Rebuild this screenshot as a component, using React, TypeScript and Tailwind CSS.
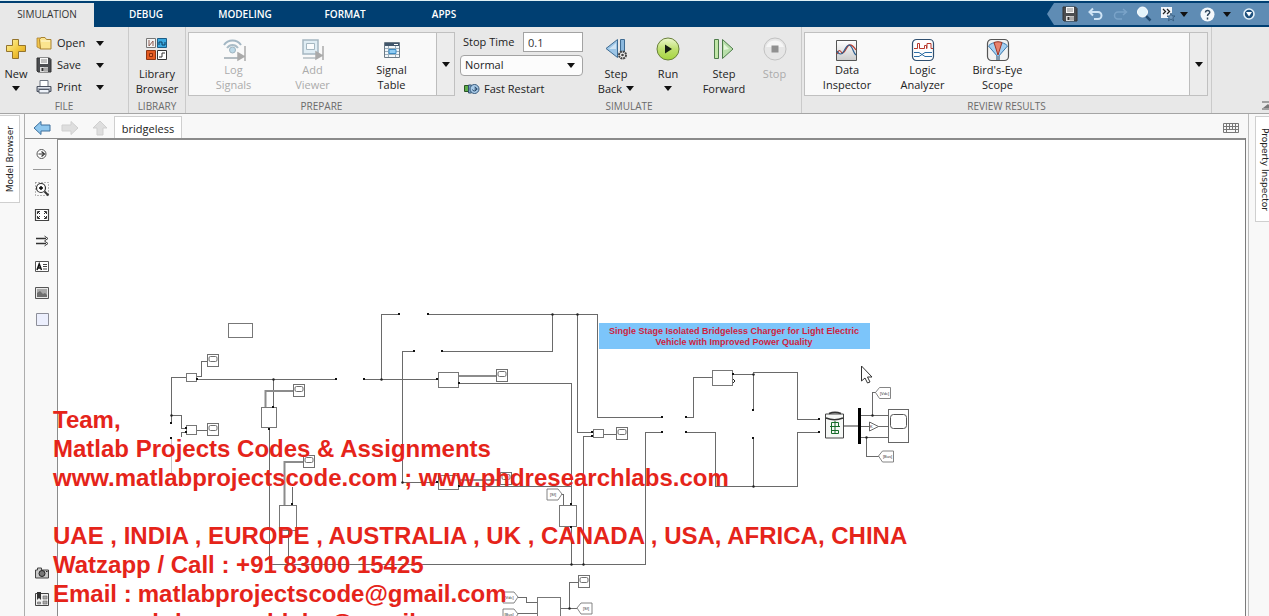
import React from "react";

function Caret({ className = "" }: { className?: string }) {
  return (
    <svg className={`shrink-0 ${className}`} width="8" height="5" viewBox="0 0 8 5" aria-hidden="true">
      <path d="M0 0h8L4 5z" fill="#111" />
    </svg>
  );
}

function NewIcon() {
  return (
    <svg width="22" height="24" viewBox="0 0 22 24" aria-hidden="true">
      <defs>
        <linearGradient id="gold" x1="0" y1="0" x2="1" y2="1">
          <stop offset="0" stopColor="#fff6a8" />
          <stop offset="0.55" stopColor="#f3c93c" />
          <stop offset="1" stopColor="#d79a1c" />
        </linearGradient>
      </defs>
      <path d="M7.500 2.500h6v6h7v6h-7v7h-6v-7h-6v-6h6z" fill="url(#gold)" stroke="#94742c" />
    </svg>
  );
}

function OpenIcon() {
  return (
    <svg width="16" height="16" viewBox="0 0 16 16" aria-hidden="true">
      <path d="M1 3h4v11L1 12z" fill="#f2c54c" stroke="#a98231" strokeWidth="0.800" />
      <path d="M3.500 4.500l1.500-2h4l1.500 2H15V14H4.500z" fill="#fbe48f" stroke="#a98231" />
      <path d="M5 6h9" stroke="#fff8d4" />
    </svg>
  );
}

function SaveIcon({ size = 16 }: { size?: number }) {
  return (
    <svg width={size} height={size} viewBox="0 0 16 16" aria-hidden="true">
      <path d="M1 1h12.500l1.500 1.500V15H2l-1-1z" fill="#4b4d50" stroke="#333" />
      <path d="M4 1h8v6H4z" fill="#f7f7f7" />
      <path d="M5 3h6M5 5h6" stroke="#888" />
      <path d="M4 10h8v5H4z" fill="#dcdcdc" />
      <path d="M5.500 11h2v3h-2z" fill="#333" />
      <path d="M9 10.500v4M11 10.500v4" stroke="#777" />
    </svg>
  );
}

function PrintIcon() {
  return (
    <svg width="16" height="16" viewBox="0 0 16 16" aria-hidden="true">
      <path d="M4 7V1.500h8V7" fill="#fff" stroke="#6d7580" />
      <path d="M1 7.500h14v5H1z" fill="#a9afbb" stroke="#4b5260" />
      <path d="M3 10.500h10V14H3z" fill="#eef3fa" stroke="#555c68" />
      <path d="M2 8.500h12" stroke="#dfe3ea" />
    </svg>
  );
}

function LibraryIcon() {
  return (
    <svg width="24" height="24" viewBox="0 0 24 24" aria-hidden="true">
      <path d="M1.500 1.500h9v9h-9z" fill="#f4f4f4" stroke="#777" />
      <path d="M4 3v6M4 9l4-5M8 4v5" stroke="#8d5d52" fill="none" />
      <path d="M12.500 1.500h9v9h-9z" fill="#3ba9e0" stroke="#1c5d86" />
      <path d="M14 8V5h3v3h3V5" stroke="#0f4063" fill="none" />
      <path d="M1.500 13.500h9v9h-9z" fill="#e45a20" stroke="#8f3512" />
      <path d="M4.500 16.500h3v3h-3z" stroke="#8b2a0a" fill="#f07a3f" />
      <path d="M12.500 13.500h9v9h-9z" fill="#fff" stroke="#333" />
      <path d="M14 20h3v-4h3" stroke="#333" fill="none" />
    </svg>
  );
}

function LogSignalsIcon() {
  return (
    <svg width="26" height="26" viewBox="0 0 26 26" fill="none" aria-hidden="true">
      <path d="M3 8c4-6 13-6 17 0" stroke="#a3b7c4" strokeWidth="2" />
      <path d="M6 11c3-4 8-4 11 0" stroke="#a9bcc7" strokeWidth="2" />
      <circle cx="11.500" cy="13" r="3" fill="#bcd9e8" stroke="#9db3bf" />
      <path d="M3 21h14" stroke="#b3bcc2" strokeWidth="2" />
      <path d="M17 16l6 3.500-6 3.500zM24 9v15" fill="#aaa" stroke="#aaa" strokeWidth="1.500" />
    </svg>
  );
}

function AddViewerIcon() {
  return (
    <svg width="26" height="26" viewBox="0 0 26 26" fill="none" aria-hidden="true">
      <path d="M3 3h15v14H3z" fill="#e0edf4" stroke="#a5b7c1" strokeWidth="1.500" />
      <path d="M6.500 6.500h8v6h-8z" fill="#fafcfd" stroke="#a5b7c1" />
      <path d="M3 21h14" stroke="#b3bcc2" strokeWidth="1.500" />
      <path d="M16 15l6 3.500-6 3.500zM23 9v14" fill="#aaa" stroke="#aaa" strokeWidth="1.500" />
    </svg>
  );
}

function SignalTableIcon() {
  return (
    <svg width="20" height="20" viewBox="0 0 20 20" aria-hidden="true">
      <path d="M2.500 2.500h15v15h-15z" fill="#f3f7fa" stroke="#6c7a86" />
      <path d="M3 3h14v3H3z" fill="#41566b" />
      <path d="M12 4.500h4" stroke="#fff" />
      <path d="M3 8.500h14M3 11.500h14M3 14.500h14M6.500 6v11M13.500 6v11" stroke="#9badba" fill="none" />
      <path d="M7 9.500h7v4H7z" fill="#8fccf4" stroke="#3c8cc5" />
    </svg>
  );
}

function StepBackIcon() {
  return (
    <svg width="24" height="24" viewBox="0 0 24 24" aria-hidden="true">
      <path d="M13.500 2.500v18L2 11.500z" fill="#9cc5e6" stroke="#3e6b92" />
      <path d="M16.500 2.500h4v14h-4z" fill="#8bb8dd" stroke="#3e6b92" />
      <path d="M12 6v6H5z" fill="#cfe4f5" />
      <circle cx="18.500" cy="18" r="3.500" fill="#eee" stroke="#444" strokeWidth="2" strokeDasharray="2 0.700" />
      <circle cx="18.500" cy="18" r="1.300" fill="#444" />
    </svg>
  );
}

function RunIcon() {
  return (
    <svg width="24" height="24" viewBox="0 0 24 24" aria-hidden="true">
      <defs>
        <linearGradient id="run" x1="0" y1="0" x2="0" y2="1">
          <stop offset="0" stopColor="#eef8d0" />
          <stop offset="0.500" stopColor="#bfe070" />
          <stop offset="1" stopColor="#a5d53d" />
        </linearGradient>
      </defs>
      <circle cx="12" cy="12" r="11" fill="url(#run)" stroke="#69803a" />
      <path d="M9 7.500l7 4.500-7 4.500z" fill="#141c12" />
    </svg>
  );
}

function StepForwardIcon() {
  return (
    <svg width="24" height="24" viewBox="0 0 24 24" aria-hidden="true">
      <path d="M2.500 2.500h4v19h-4z" fill="#c2e6a8" stroke="#4e7d4a" />
      <path d="M10.500 2.500v19L21 12z" fill="#b9dfaa" stroke="#4e7d4a" />
      <path d="M12 7v6l5-1z" fill="#e6f6dc" />
    </svg>
  );
}

function StopIcon() {
  return (
    <svg width="24" height="24" viewBox="0 0 24 24" aria-hidden="true">
      <circle cx="12" cy="12" r="11" fill="#e6e6e6" stroke="#c2c2c2" />
      <path d="M3 10a9.500 9.500 0 0 1 18 0z" fill="#f5f5f5" />
      <path d="M8.500 8.500h7v7h-7z" fill="#909090" />
    </svg>
  );
}

function FastRestartIcon() {
  return (
    <svg width="17" height="12" viewBox="0 0 17 12" aria-hidden="true">
      <path d="M1.500 2.500h4v6h-4z" fill="#5fae4a" stroke="#2c5425" />
      <path d="M5.500 2h3v8h-3z" fill="#7ba6ca" stroke="#31506d" />
      <circle cx="11.500" cy="6" r="4.500" fill="#a9cbe8" stroke="#35587a" />
      <path d="M9.500 6.500a2 2 0 1 0 2-2.500M11.500 6h3" stroke="#1f3f60" fill="none" />
    </svg>
  );
}

function DataInspectorIcon() {
  return (
    <svg width="24" height="24" viewBox="0 0 24 24" fill="none" aria-hidden="true">
      <defs>
        <linearGradient id="panel" x1="0" y1="0" x2="0" y2="1">
          <stop offset="0" stopColor="#fff" />
          <stop offset="1" stopColor="#ccc" />
        </linearGradient>
      </defs>
      <path d="M1.500 2.500h20v20h-20z" fill="url(#panel)" stroke="#555" />
      <path d="M2 16c2-5 3-4 5-1 3 1 4-6 7-8 3-1 5 2 7 5" stroke="#b8392c" strokeWidth="1.200" />
      <path d="M2 13c2 4 5 4 7 0s3-6 5-6c4 1 4 8 7 10" stroke="#2d5f8f" strokeWidth="1.200" />
    </svg>
  );
}

function LogicAnalyzerIcon() {
  return (
    <svg width="24" height="24" viewBox="0 0 24 24" fill="none" aria-hidden="true">
      <rect x="1.500" y="1.500" width="21" height="21" rx="4" fill="#fdfdfd" stroke="#2f4f6f" strokeWidth="1.200" />
      <path d="M3 10.500h3.500v-5h2v5h5v-3h2v3h.5v-5h4v5h2" stroke="#b8392c" />
      <path d="M3 14.500h5l6 4h7M3 18.500h5l6-4h7" stroke="#2d6ea5" />
    </svg>
  );
}

function BirdsEyeIcon() {
  return (
    <svg width="24" height="24" viewBox="0 0 24 24" aria-hidden="true">
      <rect x="1.500" y="1.500" width="21" height="21" rx="4" fill="#f2f2f2" stroke="#555" strokeWidth="1.200" />
      <path d="M12 19L2.500 8C6 3 18 3 21.500 8z" fill="#a5d0f2" stroke="#3a78ac" />
      <path d="M12 17L8 4.500c3-1 5-1 8 0z" fill="#e8826d" stroke="#9d3627" />
      <path d="M10 18h4v4h-4z" fill="#7f99ae" />
    </svg>
  );
}

function UndoIcon({ faded = false }: { faded?: boolean }) {
  return (
    <svg width="16" height="16" viewBox="0 0 16 16" fill="none" aria-hidden="true">
      <path
        d={faded ? "M14 6H6a3.500 3.500 0 0 0 0 7h4M11 3l3.500 3L11 9" : "M2 6h8a3.500 3.500 0 0 1 0 7H6M5 2.500L1.500 6 5 9.500"}
        stroke={faded ? "#7aa3c8" : "#cfe4f5"}
        strokeWidth={faded ? "1.500" : "2"}
      />
    </svg>
  );
}

function QuickBar() {
  return (
    <div className="mb-[2px] flex h-[22px] items-center">
      <svg width="7" height="22" viewBox="0 0 7 22" className="shrink-0" aria-hidden="true">
        <path d="M7 0v22L0 11z" fill="#5f8cb4" />
      </svg>
      <div className="flex h-[22px] items-center bg-[#5f8cb4] pl-2 pr-[14px]">
        <button aria-label="Save" className="mr-[10px]"><SaveIcon /></button>
        <button aria-label="Undo" className="mr-2"><UndoIcon /></button>
        <button aria-label="Redo" className="mr-2"><UndoIcon faded /></button>
        <button aria-label="Find" className="mr-2">
          <svg width="16" height="16" viewBox="0 0 16 16" aria-hidden="true">
            <path d="M10 10l4.500 4.500" stroke="#234c72" strokeWidth="2.500" />
            <circle cx="6.500" cy="6" r="5" fill="#e4f4fb" stroke="#fff" />
          </svg>
        </button>
        <button aria-label="Favorite commands" className="flex items-center gap-1">
          <svg width="16" height="16" viewBox="0 0 16 16" fill="none" aria-hidden="true">
            <path d="M1 1h11v11H1z" fill="#f2f6fa" />
            <path d="M3 3l2.500 2.500L3 8M7 3l2.500 2.500L7 8" stroke="#222" strokeWidth="1.300" />
            <path d="M11 7l1.200 3H15l-2.200 1.800.8 3L11 13l-2.600 1.800.8-3L7 10h2.800z" fill="#6f97bb" stroke="#2e5579" strokeWidth="0.800" />
          </svg>
          <Caret />
        </button>
        <button aria-label="Help" className="ml-3 flex items-center gap-2">
          <svg width="15" height="15" viewBox="0 0 15 15" fill="none" aria-hidden="true">
            <circle cx="7.500" cy="7.500" r="7" fill="#f4f8fb" />
            <path d="M5.500 5.500c0-3 4.500-2.500 4.200 0-.2 1.500-2.200 1.500-2.200 3.500M7.500 10.500v2" stroke="#30475d" strokeWidth="1.500" />
          </svg>
          <Caret />
        </button>
        <button aria-label="Minimize toolstrip" className="ml-3">
          <svg width="12" height="12" viewBox="0 0 12 12" aria-hidden="true">
            <circle cx="6" cy="6" r="5" fill="#1c4f7c" stroke="#e6f2fa" strokeWidth="1.600" />
            <path d="M3 4h6L6 8.500z" fill="#fff" />
          </svg>
        </button>
      </div>
    </div>
  );
}

function Section({ label, className, children }: { label: string; className: string; children: React.ReactNode }) {
  return (
    <section aria-label={label} className={`flex shrink-0 flex-col ${className}`}>
      <div className="flex h-[68px] shrink-0 items-start pt-[5px]">{children}</div>
      <div className="pt-1 text-center text-[10px] leading-[14px] text-[#6b6b6b]">{label}</div>
    </section>
  );
}

function FileRow({ icon, label }: { icon: React.ReactNode; label: string }) {
  return (
    <button className="flex h-[22px] w-[68px] shrink-0 items-center">
      {icon}
      <span className="ml-[5px] flex-1 text-left">{label}</span>
      <Caret />
    </button>
  );
}

function ToolButton({
  icon,
  lines,
  className,
  caret,
  disabled,
  gallery,
}: {
  icon: React.ReactNode;
  lines: string[];
  className: string;
  caret?: "below" | "beside";
  disabled?: boolean;
  gallery?: boolean;
}) {
  return (
    <button
      disabled={disabled}
      className={`flex shrink-0 flex-col items-center ${gallery ? "pt-1" : "pt-[2px]"} ${disabled ? "text-[#ababab]" : "text-[#222]"} ${className}`}
    >
      <span className={`flex items-center justify-center ${gallery ? "h-[25px]" : "mb-[2px] h-[30px]"}`}>{icon}</span>
      {lines.map((line, i) => (
        <span key={line} className="flex items-center gap-1 whitespace-nowrap leading-[15px]">
          {line}
          {caret === "beside" && i === lines.length - 1 ? <Caret /> : null}
        </span>
      ))}
      {caret === "below" ? <Caret className="mt-[5px]" /> : null}
    </button>
  );
}

function GalleryMore({ label }: { label: string }) {
  return (
    <button aria-label={label} className="flex w-[18px] shrink-0 items-center justify-center border-l border-[#bdbdbd] bg-[#ececec]">
      <Caret />
    </button>
  );
}

function Ribbon() {
  return (
    <div className="flex h-[87px] shrink-0 border-b border-[#a5a5a5] bg-[#e8e8e8] text-[11px] text-[#222]">
      <Section label="FILE" className="w-[129px] border-r border-[#cacaca]">
        <ToolButton icon={<NewIcon />} lines={["New"]} caret="below" className="w-8" />
        <div className="ml-1 flex flex-col">
          <FileRow icon={<OpenIcon />} label="Open" />
          <FileRow icon={<SaveIcon />} label="Save" />
          <FileRow icon={<PrintIcon />} label="Print" />
        </div>
      </Section>
      <Section label="LIBRARY" className="w-[57px] border-r border-[#cacaca]">
        <ToolButton icon={<LibraryIcon />} lines={["Library", "Browser"]} className="w-full" />
      </Section>
      <Section label="PREPARE" className="w-[271px]">
        <div className="mx-[2px] flex h-16 flex-1 items-stretch border border-[#c0c0c0] bg-[#f9f9f9]">
          <ToolButton gallery icon={<LogSignalsIcon />} lines={["Log", "Signals"]} disabled className="w-[89px]" />
          <ToolButton gallery icon={<AddViewerIcon />} lines={["Add", "Viewer"]} disabled className="w-[69px]" />
          <ToolButton gallery icon={<SignalTableIcon />} lines={["Signal", "Table"]} className="flex-1" />
          <GalleryMore label="More prepare tools" />
        </div>
      </Section>
      <Section label="SIMULATE" className="w-[345px] border-r border-[#cacaca]">
        <div className="ml-[3px] flex w-[123px] flex-col">
          <div className="flex h-5 items-center justify-between pl-[3px]">
            <label htmlFor="stop-time">Stop Time</label>
            <input id="stop-time" defaultValue="0.1" className="h-5 w-[60px] border border-[#a3a3a3] bg-white px-1 text-[11px] text-[#333]" />
          </div>
          <div className="relative mt-[3px]">
            <select aria-label="Simulation mode" className="block h-[21px] w-full appearance-none rounded border border-[#a3a3a3] bg-[#fcfcfc] pl-1 text-[11px]">
              <option>Normal</option>
            </select>
            <Caret className="pointer-events-none absolute right-2 top-2" />
          </div>
          <button className="mt-[3px] flex h-5 items-center gap-1 pl-[3px]">
            <FastRestartIcon />
            Fast Restart
          </button>
        </div>
        <ToolButton icon={<StepBackIcon />} lines={["Step", "Back"]} caret="beside" className="ml-2 w-[50px]" />
        <ToolButton icon={<RunIcon />} lines={["Run"]} caret="below" className="w-[54px]" />
        <ToolButton icon={<StepForwardIcon />} lines={["Step", "Forward"]} className="w-[58px]" />
        <ToolButton icon={<StopIcon />} lines={["Stop"]} disabled className="w-[43px]" />
      </Section>
      <Section label="REVIEW RESULTS" className="w-[410px] border-r border-[#cacaca]">
        <div className="ml-[2px] mr-[3px] flex h-16 flex-1 items-stretch border border-[#c0c0c0] bg-[#f9f9f9]">
          <ToolButton gallery icon={<DataInspectorIcon />} lines={["Data", "Inspector"]} className="ml-1 w-[76px]" />
          <ToolButton gallery icon={<LogicAnalyzerIcon />} lines={["Logic", "Analyzer"]} className="w-[75px]" />
          <ToolButton gallery icon={<BirdsEyeIcon />} lines={["Bird's-Eye", "Scope"]} className="w-[75px]" />
          <div className="flex-1" />
          <GalleryMore label="More review tools" />
        </div>
      </Section>
      <div className="flex flex-1 items-end justify-end overflow-hidden pb-[3px]">
        <button aria-label="Collapse toolstrip">
          <svg width="7" height="9" viewBox="0 0 7 9" aria-hidden="true">
            <path d="M0 1h7M0 8h7" stroke="#888" strokeWidth="1.500" />
            <path d="M1 7l5-4 1 1v3z" fill="#777" />
          </svg>
        </button>
      </div>
    </div>
  );
}

function ArrowIcon({ kind }: { kind: "back" | "forward" | "up" }) {
  const shape =
    kind === "back"
      ? "M1 9l7-6.500V6h9v6H8v3.500z"
      : kind === "forward"
        ? "M17 9l-7-6.500V6H1v6h9v3.500z"
        : "M9 2l7 7h-4v7H6V9H2z";
  return (
    <svg width="18" height="18" viewBox="0 0 18 18" aria-hidden="true">
      <path d={shape} fill={kind === "back" ? "#8fc7ee" : "#dedede"} stroke={kind === "back" ? "#3c6f9c" : "#cfcfcf"} />
    </svg>
  );
}

const paletteTop: { name: string; art: React.ReactNode }[] = [
  {
    name: "Fit region",
    art: (
      <>
        <path d="M1.500 1.500h13v13h-13z" fill="none" stroke="#777" strokeDasharray="1 2" />
        <circle cx="7" cy="7" r="4.500" fill="#fff" stroke="#333" strokeWidth="1.200" />
        <path d="M7 5v4M5 7h4" stroke="#000" strokeWidth="1.400" />
        <path d="M10.500 10.500l4 4" stroke="#333" strokeWidth="2" />
      </>
    ),
  },
  {
    name: "Fit to view",
    art: (
      <>
        <path d="M1.500 2.500h13v11h-13z" fill="#fff" stroke="#444" strokeWidth="1.200" />
        <path d="M3.500 7V4.500H6M4 5l2 2M12.500 7V4.500H10M12 5l-2 2M3.500 9v2.500H6M4 11l2-2M12.500 9v2.500H10M12 11l-2-2" stroke="#333" fill="none" />
      </>
    ),
  },
  {
    name: "Sample time",
    art: (
      <>
        <path d="M2 5.500h10M2 10.500h10" stroke="#333" strokeWidth="1.300" />
        <path d="M10.500 3l3.500 2.500L10.500 8M10.500 8l3.500 2.500-3.500 2.500" fill="none" stroke="#444" />
      </>
    ),
  },
  {
    name: "Annotation",
    art: (
      <>
        <path d="M1.500 2.500h13v10h-13z" fill="#fff" stroke="#555" />
        <path d="M3 11l2.200-6L7.500 11M4 9h3" fill="none" stroke="#111" strokeWidth="1.500" />
        <path d="M9 5.500h4M9 7.500h4M9 10h4" stroke="#444" />
      </>
    ),
  },
  {
    name: "Image",
    art: (
      <>
        <path d="M1.500 2.500h13v11h-13z" fill="#e9e9e9" stroke="#555" />
        <path d="M3 4h10v8H3z" fill="#a9a9a9" />
        <path d="M3 12V8l3-2 3 3 2-1 2 2v2z" fill="#6f6f6f" />
      </>
    ),
  },
  { name: "Area", art: <path d="M2.500 2.500h12v12h-12z" fill="#eceffd" stroke="#8d8f99" /> },
];

const paletteBottom: { name: string; art: React.ReactNode }[] = [
  {
    name: "Snapshot",
    art: (
      <>
        <path d="M1.500 5h2V3h4v2h7v8h-13z" fill="#c9c9c9" stroke="#444" />
        <circle cx="8" cy="8.500" r="3" fill="#777" stroke="#222" />
        <path d="M12 6.500h1.500" stroke="#222" />
      </>
    ),
  },
  {
    name: "Model data",
    art: (
      <>
        <path d="M1.500 2.500h13v12h-13z" fill="#f1f1f1" stroke="#444" />
        <path d="M3 1h4v8L5 7 3 9z" fill="#333" />
        <path d="M9 5h4v3H9zM9 10h4v3H9zM3.500 11h3v2h-3z" fill="#aaa" stroke="#666" strokeWidth="0.600" />
      </>
    ),
  },
];

function PaletteButton({ name, children }: { name: string; children: React.ReactNode }) {
  return (
    <button aria-label={name} className="flex h-[26px] w-full items-center justify-center">
      <svg width="16" height="16" viewBox="0 0 16 16" aria-hidden="true">{children}</svg>
    </button>
  );
}

function Scope({ x, y }: { x: number; y: number }) {
  return (
    <g stroke="#707070" fill="#fff">
      <rect x={x} y={y} width="11" height="12" />
      <rect x={x + 1.5} y={y + 2} width="8" height="5" rx="1.5" />
    </g>
  );
}

function Block({ x, y, w, h }: { x: number; y: number; w: number; h: number }) {
  return <rect x={x} y={y} width={w} height={h} fill="#fff" stroke="#777" />;
}

function Tag({ x, y, label, flip }: { x: number; y: number; label: string; flip?: boolean }) {
  return (
    <g>
      <path
        d={flip ? `M${x + 15} ${y}h-11l-4 5 4 6h11z` : `M${x} ${y}h11l4 5-4 6h-11z`}
        fill="#fff"
        stroke="#777"
        strokeWidth="0.900"
      />
      <text x={x + (flip ? 9 : 6)} y={y + 7} fontSize="4" textAnchor="middle" fill="#333">{label}</text>
    </g>
  );
}

const ports: [number, number][] = [
  [399, 314], [428, 314], [414, 351], [442, 351], [336, 379], [364, 379], [197, 379], [171, 423], [171, 438],
  [186, 428], [186, 432], [273, 407], [269, 429], [437, 379], [459, 383], [662, 417], [662, 432], [686, 417],
  [686, 432], [733, 374], [753, 410], [753, 438], [819, 419], [819, 432], [592, 432], [592, 436], [571, 504],
  [571, 527], [292, 504], [459, 486], [437, 482],
];

const junctions: [number, number][] = [
  [552, 314], [577, 314], [381, 379], [273, 379], [402, 482], [753, 374], [753, 486], [571, 564], [583, 564],
  [171, 415], [569, 608], [872, 415], [866, 437],
];

function Diagram() {
  return (
    <svg className="absolute left-0 top-0" width="1187" height="476" viewBox="58 140 1187 476" fontFamily="Liberation Sans, sans-serif" aria-label="bridgeless block diagram">
      <g fill="none" stroke="#6a6a6a" shapeRendering="crispEdges">
        <path d="M381.500 379V314.500H399M428 314.500H597.500V417.500H662M577.500 314V432.500H593M552.500 314V351.500H442M414 351.500H402.500V482.500H438" />
        <path d="M197 379.500H336M364 379.500H438M459 383.500H571.500V504M571.500 527V564M583.500 564V436.500H593M604 434.500H616" />
        <path d="M171.500 423V377.500H187M171.500 415.500H181.500V428.500H186M181.500 437V432.500H186M197 376.500H201.500V361.500H207M197 430.500H207" />
        <path d="M171.500 438V475" stroke="#c5c5c5" />
        <path d="M273.500 379V407M269.500 429V564.500H645.500V432.500H662M459 486.500H571M292.500 487V504M288.500 530V564" />
        <path d="M686 417.500H693.500V377.500H712M733 374.500H753.500V410M753 372.500H797.500V419.500H819M753.500 438V486M686 432.500H715.500V486.500H797.500V432.500H819" />
        <path d="M559 494H563.500V505M518 597.500H526.500V602.500H537M518 613.500H537M561 608.500H577M569.500 608V582.500H578" />
        <path d="M861 415.500H888M861 426.500H869M878 426.500H888M861 437.500H888M872.500 415V392.500H876M866.500 437V456.500H880" />
      </g>
      <g fill="none" stroke="#8c8c8c" strokeWidth="2">
        <path d="M265.500 407V391H293M284.500 505V462H303M459 376H496M459 480H502" />
      </g>
      <Block x={228.5} y={323.5} w={24} h={14} />
      <Block x={186.5} y={373.5} w={10} h={8} />
      <Block x={186.5} y={425.5} w={10} h={9} />
      <Block x={261.5} y={407.5} w={15} h={20} />
      <Block x={279.5} y={505.5} w={17} h={25} />
      <Block x={438.5} y={372.5} w={20} h={15} />
      <Block x={438.5} y={475.5} w={20} h={14} />
      <Block x={593.5} y={429.5} w={10} h={8} />
      <Block x={559.5} y={505.5} w={17} h={21} />
      <Block x={712.5} y={370.5} w={20} h={15} />
      <Block x={537.5} y={597.5} w={23} h={22} />
      <path d="M733 379l2 2-2 2" fill="none" stroke="#222" />
      <Scope x={207.5} y={354.5} />
      <Scope x={207.5} y={423.5} />
      <Scope x={293.5} y={384.5} />
      <Scope x={303.5} y={455.5} />
      <Scope x={496.5} y={369.5} />
      <Scope x={500.5} y={472.5} />
      <Scope x={616.5} y={427.5} />
      <Scope x={578.5} y={575.5} />
      <Tag x={547} y={489} label="[Sf]" />
      <Tag x={503} y={592} label="[Vdc]" />
      <Tag x={503} y={609} label="[Bus]" />
      <Tag x={577} y={603} label="[Sf]" flip />
      <Tag x={875.5} y={387.5} label="[Vdc]" flip />
      <Tag x={878.5} y={451} label="[Bus]" flip />
      <path d="M825.500 414h18v24h-18z" fill="#f6f8f6" stroke="#444" />
      <path d="M826 418c5 2 12 2 17 0M829 413.500c4-1.500 8-1.500 12 0" fill="none" stroke="#333" strokeWidth="1.500" />
      <path d="M831.500 422.500h7v4h-7v4h7v3h-7zM835 421v13M830 426.500h10" fill="none" stroke="#176b2a" />
      <path d="M844 426h14" stroke="#999" strokeWidth="2" />
      <path d="M858 408h3v36h-3z" fill="#000" />
      <path d="M869.500 422v9l9-4.500z" fill="#fff" stroke="#666" />
      <text x="870" y="428" fontSize="4" fill="#333">K</text>
      <rect x="888.500" y="409.500" width="20" height="33" fill="#fff" stroke="#666" />
      <rect x="890.500" y="414.500" width="16" height="14" rx="3" fill="#fff" stroke="#555" />
      {ports.map(([x, y]) => <rect key={`${x}-${y}`} x={x - 1} y={y - 1} width="2" height="2" fill="#111" />)}
      {junctions.map(([x, y]) => <circle key={`${x}-${y}`} cx={x + 0.5} cy={y + 0.5} r="1.2" fill="#222" />)}
      <rect x="599" y="323" width="271" height="26" fill="#7cc5fa" />
      <g fontSize="9" fontWeight="700" fill="#cf1f3f" textAnchor="middle">
        <text x="734" y="334">Single Stage Isolated Bridgeless Charger for Light Electric</text>
        <text x="734" y="345">Vehicle with Improved Power Quality</text>
      </g>
      <path d="M861.500 366v15l3.500-3 2.500 5 2.500-1-2.500-5h4.500z" fill="#fff" stroke="#333" />
    </svg>
  );
}

function TeamNote() {
  return (
    <div className="pointer-events-none absolute left-[53px] top-[405px] whitespace-nowrap font-['Liberation_Sans',sans-serif] text-2xl font-bold leading-[29px] text-[#e5241a]">
      <p>Team,</p>
      <p>Matlab Projects Codes &amp; Assignments</p>
      <p>www.matlabprojectscode.com ; www.phdresearchlabs.com</p>
      <p className="mt-[29px]">UAE , INDIA , EUROPE , AUSTRALIA , UK , CANADA , USA, AFRICA, CHINA</p>
      <p>Watzapp / Call : +91 83000 15425</p>
      <div className="flex gap-[6px]">
        <p>Email :</p>
        <div>
          <p>matlabprojectscode@gmail.com</p>
          <p>phdresearchlabs@gmail.com</p>
        </div>
      </div>
    </div>
  );
}

export default function App() {
  return (
    <div className="relative flex h-screen flex-col overflow-hidden bg-[#f8f8f8] font-['Open_Sans',sans-serif] text-[11px] text-[#222]">
      <header className="flex h-[27px] shrink-0 items-end border-t border-[#dff0f5] bg-[#003f72]">
        <nav aria-label="Toolstrip tabs" className="flex flex-1 items-end text-[10px] font-semibold text-white">
          <button className="h-6 w-[94px] bg-[#e8e8e8] pb-[2px] font-normal text-[#333]">SIMULATION</button>
          <button className="h-6 w-[104px] pb-[2px]">DEBUG</button>
          <button className="h-6 w-[94px] pb-[2px]">MODELING</button>
          <button className="h-6 w-[106px] pb-[2px]">FORMAT</button>
          <button className="h-6 w-[92px] pb-[2px]">APPS</button>
        </nav>
        <QuickBar />
      </header>
      <Ribbon />
      <div className="flex min-h-0 flex-1">
        <aside className="w-[25px] shrink-0 border-r border-[#adadad]">
          <button className="mt-px flex h-[88px] w-5 items-center justify-center border border-l-0 border-[#cfcfcf] bg-white">
            <span className="rotate-180 whitespace-nowrap font-['DejaVu_Sans',sans-serif] text-[9px] leading-3 [writing-mode:vertical-rl]">Model Browser</span>
          </button>
        </aside>
        <div className="flex min-w-0 flex-1 flex-col">
          <div className="ml-[3px] flex h-6 shrink-0 items-center">
            <button aria-label="Back" className="ml-[5px] pt-1"><ArrowIcon kind="back" /></button>
            <button aria-label="Forward" className="ml-[10px] pt-1"><ArrowIcon kind="forward" /></button>
            <button aria-label="Up to parent" className="ml-3 pt-1"><ArrowIcon kind="up" /></button>
            <button className="ml-[5px] mt-[2px] h-[22px] w-[68px] border border-b-0 border-[#cfcfcf] bg-white pt-1">bridgeless</button>
            <div className="flex-1" />
            <button aria-label="Keyboard shortcuts" className="mr-[9px] pt-1">
              <svg width="16" height="10" viewBox="0 0 16 10" fill="none" stroke="#777" aria-hidden="true">
                <path d="M.5.500h15v9H.5z" />
                <path d="M1 3.500h14M1 6.500h14M3.500 1v5M6.500 1v5M9.500 1v5M12.500 1v5M3.500 7v2M12.500 7v2" />
              </svg>
            </button>
          </div>
          <div className="mr-[2px] flex min-h-0 flex-1 border-r border-[#7b7b7b]">
            <div role="toolbar" aria-label="Palette" className="flex w-[33px] shrink-0 flex-col items-center border-r border-t border-[#8b8b8b] pb-1 pl-[2px] pt-[2px]">
              <PaletteButton name="Hide or show browser">
                <circle cx="7.500" cy="8" r="4.500" fill="#fff" stroke="#555" />
                <path d="M4.500 8h5M7.500 5.500l3 2.500-3 2.500" fill="none" stroke="#333" strokeWidth="1.200" />
              </PaletteButton>
              <div className="mb-[6px] mt-[2px] h-px w-[18px] bg-[#999]" />
              {paletteTop.map((p) => <PaletteButton key={p.name} name={p.name}>{p.art}</PaletteButton>)}
              <div className="flex-1" />
              {paletteBottom.map((p) => <PaletteButton key={p.name} name={p.name}>{p.art}</PaletteButton>)}
            </div>
            <main className="relative min-w-0 flex-1 overflow-hidden border-t-2 border-[#8b8b8b] bg-white">
              <Diagram />
            </main>
          </div>
        </div>
        <aside className="w-[21px] shrink-0 overflow-hidden border-l border-[#bdbdbd] pl-[6px]">
          <button className="mt-[2px] flex h-[106px] w-5 items-center justify-center border border-[#cfcfcf] bg-white">
            <span className="whitespace-nowrap font-['DejaVu_Sans',sans-serif] text-[9px] leading-3 [writing-mode:vertical-rl]">Property Inspector</span>
          </button>
        </aside>
      </div>
      <TeamNote />
    </div>
  );
}
